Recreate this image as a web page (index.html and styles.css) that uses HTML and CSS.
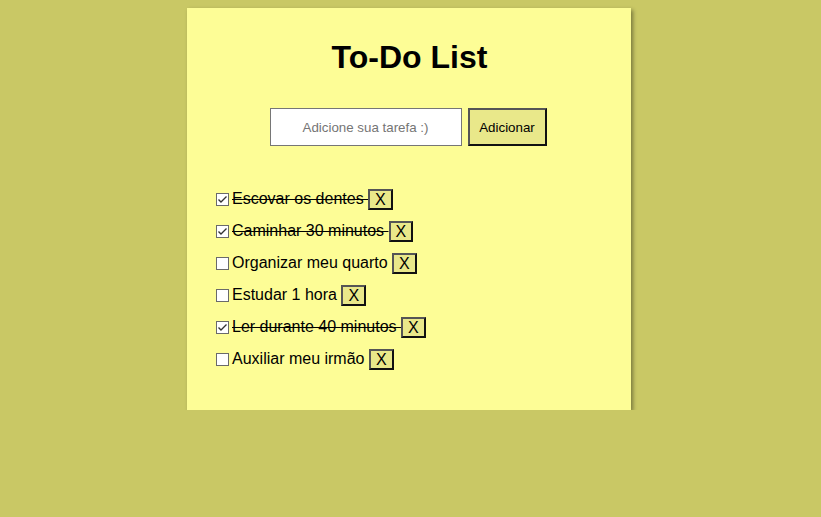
FILE: index.html
```html
<!DOCTYPE html>
<html lang="pt-BR">
<head>
<meta charset="utf-8">
<title>To-Do List</title>
<link rel="stylesheet" href="styles.css">
</head>
<body>
<main class="card">
  <h1 class="title">To-Do List</h1>
  <form class="add-form">
    <input class="task-input" type="text" placeholder="Adicione sua tarefa :)">
    <button class="add-btn" type="button">Adicionar</button>
  </form>
  <ul class="task-list">
    <li class="task done"><input class="check" type="checkbox" checked><span class="label">Escovar os dentes </span><button class="del-btn" type="button">X</button></li>
    <li class="task done"><input class="check" type="checkbox" checked><span class="label">Caminhar 30 minutos </span><button class="del-btn" type="button">X</button></li>
    <li class="task"><input class="check" type="checkbox"><span class="label">Organizar meu quarto </span><button class="del-btn" type="button">X</button></li>
    <li class="task"><input class="check" type="checkbox"><span class="label">Estudar 1 hora </span><button class="del-btn" type="button">X</button></li>
    <li class="task done"><input class="check" type="checkbox" checked><span class="label">Ler durante 40 minutos </span><button class="del-btn" type="button">X</button></li>
    <li class="task"><input class="check" type="checkbox"><span class="label">Auxiliar meu irmão </span><button class="del-btn" type="button">X</button></li>
  </ul>
</main>
</body>
</html>
```
FILE: styles.css
```css
html, body {
  margin: 0;
  padding: 0;
}
body {
  background: #c9c865;
  font-family: "Liberation Sans", Arial, sans-serif;
  padding-top: 8px;
}
.card {
  width: 444px;
  height: 402px;
  box-sizing: border-box;
  margin-left: 187px;
  background: #fdfd96;
  box-shadow: 2px 2px 4px rgba(0, 0, 0, 0.4);
  padding: 1px 0 0;
}
.title {
  text-align: center;
  font-size: 32px;
  margin: 30px 0 0 1px;
  line-height: 37px;
}
.add-form {
  display: flex;
  justify-content: center;
  gap: 6px;
  margin-top: 32px;
  padding-right: 2px;
}
.task-input {
  width: 192px;
  height: 38px;
  box-sizing: border-box;
  border: 1px solid #767676;
  background: #fff;
  text-align: center;
  font-family: "Liberation Sans", Arial, sans-serif;
  font-size: 13.33px;
  padding: 0 4px;
  margin: 0;
}
.task-input::placeholder {
  color: #757575;
}
.add-btn {
  width: 79px;
  height: 38px;
  box-sizing: border-box;
  background: #e9e88a;
  border: 2px solid;
  border-color: #555 #111 #111 #555;
  font-family: "Liberation Sans", Arial, sans-serif;
  font-size: 13.33px;
  color: #000;
  margin: 0;
  padding: 0;
}
.task-list {
  list-style: none;
  margin: 44px 0 0;
  padding: 0 0 0 25px;
}
.task {
  display: flex;
  align-items: center;
  font-size: 16px;
  line-height: 18px;
  height: 18px;
  margin-bottom: 14px;
}
.check {
  appearance: none;
  -webkit-appearance: none;
  box-sizing: border-box;
  width: 13px;
  height: 13px;
  margin: 0 3px 0 4px;
  border: 1px solid #6a6a6a;
  background: #fff;
  flex: none;
}
.check:checked {
  background: #fff url("data:image/svg+xml,%3Csvg xmlns='http://www.w3.org/2000/svg' width='11' height='11' viewBox='0 0 11 11'%3E%3Cpolyline points='1.5,5.5 4,8 9.5,2.5' fill='none' stroke='%23333' stroke-width='1.4'/%3E%3C/svg%3E") no-repeat center;
}
.label {
  white-space: pre;
}
.done .label {
  text-decoration: line-through;
}
.del-btn {
  background: #e9e88a;
  border: 2px solid;
  border-color: #555 #111 #111 #555;
  font-family: "Liberation Sans", Arial, sans-serif;
  font-size: 16px;
  line-height: 17px;
  padding: 0 5px;
  margin: 0;
  color: #000;
}
```
